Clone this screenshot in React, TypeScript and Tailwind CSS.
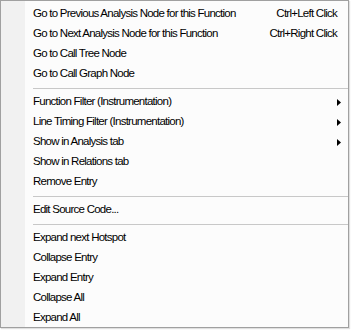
import React from "react";

type Entry =
  | { kind: "item"; label: string; shortcut?: string; submenu?: boolean }
  | { kind: "sep" };

const entries: Entry[] = [
  { kind: "item", label: "Go to Previous Analysis Node for this Function", shortcut: "Ctrl+Left Click" },
  { kind: "item", label: "Go to Next Analysis Node for this Function", shortcut: "Ctrl+Right Click" },
  { kind: "item", label: "Go to Call Tree Node" },
  { kind: "item", label: "Go to Call Graph Node" },
  { kind: "sep" },
  { kind: "item", label: "Function Filter (Instrumentation)", submenu: true },
  { kind: "item", label: "Line Timing Filter (Instrumentation)", submenu: true },
  { kind: "item", label: "Show in Analysis tab", submenu: true },
  { kind: "item", label: "Show in Relations tab" },
  { kind: "item", label: "Remove Entry" },
  { kind: "sep" },
  { kind: "item", label: "Edit Source Code..." },
  { kind: "sep" },
  { kind: "item", label: "Expand next Hotspot" },
  { kind: "item", label: "Collapse Entry" },
  { kind: "item", label: "Expand Entry" },
  { kind: "item", label: "Collapse All" },
  { kind: "item", label: "Expand All" },
];

const SubArrow = () => (
  <svg width="4" height="7" viewBox="0 0 4 7" className="block">
    <path d="M0 0 L4 3.5 L0 7 Z" fill="#000" />
  </svg>
);

export default function App() {
  return (
    <div className="w-[352px] h-[330px] bg-white">
      <div className="relative w-[349px] h-[328px] border border-[#a0a0a0] bg-[#fcfcfc] shadow-[1px_1px_1px_rgba(0,0,0,0.12)] text-[11.5px] tracking-[-0.75px] text-black font-['Liberation_Sans',Arial,sans-serif]">
        <div className="absolute left-0 top-0 bottom-0 w-[24px] bg-[#f1f1f1]" />
        <div className="relative pt-[3px]">
          {entries.map((e, i) =>
            e.kind === "sep" ? (
              <div key={i} className="h-[8px] flex items-center pl-[32px]">
                <div className="h-px w-full bg-[#c8c8c8]" />
              </div>
            ) : (
              <div key={i} className="h-[20px] flex items-center pl-[32px] pr-[11px]">
                <span className="flex-1 whitespace-nowrap">{e.label}</span>
                {e.shortcut && <span className="whitespace-nowrap pl-4">{e.shortcut}</span>}
                {e.submenu && (
                  <span className="mr-[-4px]">
                    <SubArrow />
                  </span>
                )}
              </div>
            )
          )}
        </div>
      </div>
    </div>
  );
}
